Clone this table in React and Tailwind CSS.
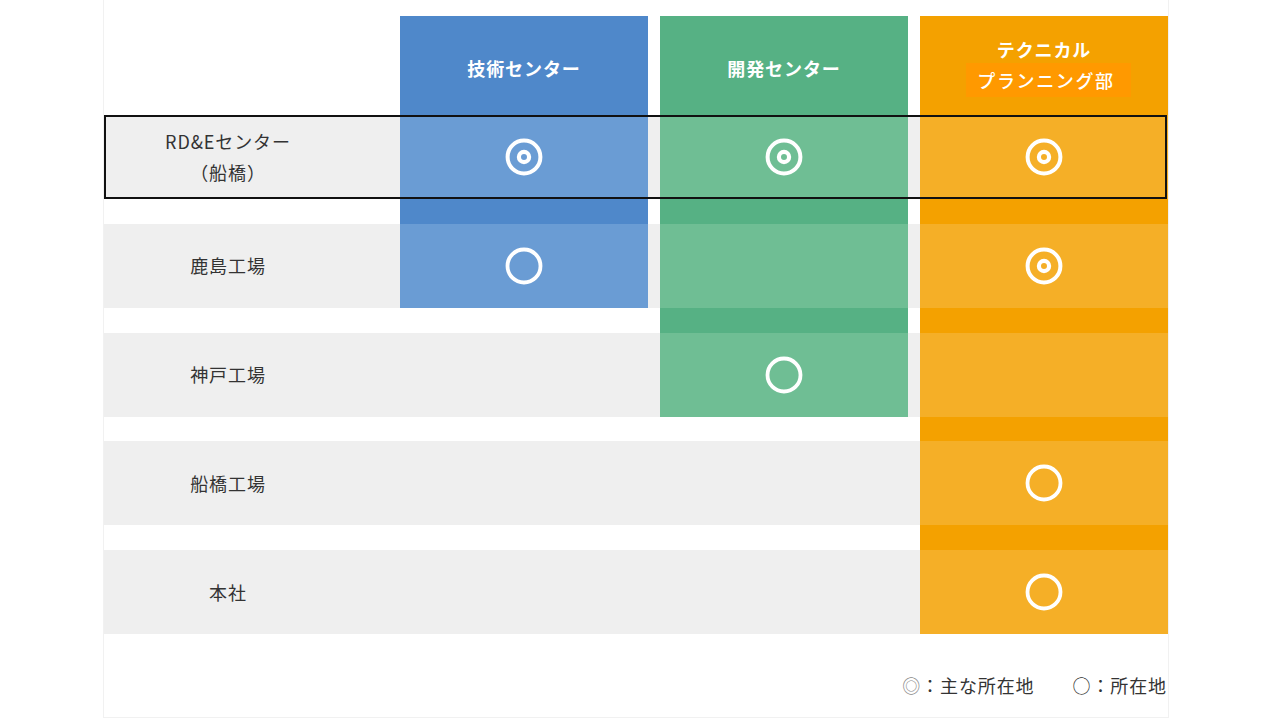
import React from "react";

const FONT = "font-['Noto_Sans_CJK_JP','Noto_Sans',sans-serif]";

const COLS = [
  { dark: "bg-[#4f88ca]", light: "bg-[#6a9cd4]" },
  { dark: "bg-[#56b184]", light: "bg-[#6fbe94]" },
  { dark: "bg-[#f4a100]", light: "bg-[#f5af27]" },
];

const ROWS = [
  { label: ["RD&Eセンター", "（船橋）"], cells: ["dbl", "dbl", "dbl"], gap: [true, true, true], highlight: true },
  { label: ["鹿島工場"], cells: ["one", "empty", "dbl"], gap: [false, true, true] },
  { label: ["神戸工場"], cells: [null, "one", "empty"], gap: [false, false, true] },
  { label: ["船橋工場"], cells: [null, null, "one"], gap: [false, false, true] },
  { label: ["本社"], cells: [null, null, "one"], gap: null },
];

function DoubleCircle() {
  return (
    <svg width="38" height="38" viewBox="0 0 38 38">
      <circle cx="19" cy="19" r="16.4" stroke="white" strokeWidth="4" fill="none" />
      <circle cx="19" cy="19" r="5.1" stroke="white" strokeWidth="4.2" fill="none" />
    </svg>
  );
}

function SingleCircle() {
  return (
    <svg width="38" height="38" viewBox="0 0 38 38">
      <circle cx="19" cy="19" r="16.5" stroke="white" strokeWidth="3.8" fill="none" />
    </svg>
  );
}

export default function App() {
  return (
    <div className={`w-[1280px] h-[720px] bg-white overflow-hidden ${FONT}`}>
      <div className="ml-[103px] w-[1066px] h-[718px] border-l border-r border-b border-[#f1f1f1] pt-[16px] flex flex-col">
        {/* header */}
        <div className="flex h-[99px]">
          <div className="w-[296px]" />
          <div className="flex gap-[12px]">
            <div className={`w-[248px] ${COLS[0].dark} flex items-center justify-center text-white font-bold text-[18px] tracking-[0.05em] pt-[5px]`}>
              技術センター
            </div>
            <div className={`w-[248px] ${COLS[1].dark} flex items-center justify-center text-white font-bold text-[18px] tracking-[0.05em] pt-[5px]`}>
              開発センター
            </div>
            <div className={`w-[248px] ${COLS[2].dark} flex flex-col items-center justify-center text-white text-[18px] pt-[1px]`}>
              <span className="font-bold tracking-[0.05em] leading-[28px]">テクニカル</span>
              <span className="bg-[#ff9900] pl-[11px] pr-[16px] ml-[9px] leading-[34px] font-medium tracking-[0.09em]">
                プランニング部
              </span>
            </div>
          </div>
        </div>

        {ROWS.map((row, i) => (
          <React.Fragment key={i}>
            <div className="relative flex h-[84px] bg-[#efefef]">
              <div className="w-[296px] pr-[48px] flex flex-col items-center justify-center text-[#333] text-[18px] tracking-[0.05em] leading-[31px]">
                {row.label.map((l, k) => (
                  <span key={k}>{l}</span>
                ))}
              </div>
              <div className="flex gap-[12px]">
                {row.cells.map((c, j) => (
                  <div
                    key={j}
                    className={`w-[248px] flex items-center justify-center ${c ? COLS[j].light : ""}`}
                  >
                    {c === "dbl" && <DoubleCircle />}
                    {c === "one" && <SingleCircle />}
                  </div>
                ))}
              </div>
              {row.highlight && (
                <div className="absolute inset-0 right-[1px] border-2 border-[#111] pointer-events-none" />
              )}
            </div>
            {row.gap && (
              <div className="flex h-[24.75px]">
                <div className="w-[296px]" />
                <div className="flex gap-[12px]">
                  {row.gap.map((g, j) => (
                    <div key={j} className={`w-[248px] ${g ? COLS[j].dark : ""}`} />
                  ))}
                </div>
              </div>
            )}
          </React.Fragment>
        ))}

        {/* legend */}
        <div className="flex justify-end items-start pt-[38px] pr-[1px] text-[#333] text-[18px] tracking-[0.05em] leading-[26px]">
          <span>
            <span className="text-[#8a8a8a]">◎</span>：主な所在地
          </span>
          <span className="ml-[38px]">○：所在地</span>
        </div>
      </div>
    </div>
  );
}
